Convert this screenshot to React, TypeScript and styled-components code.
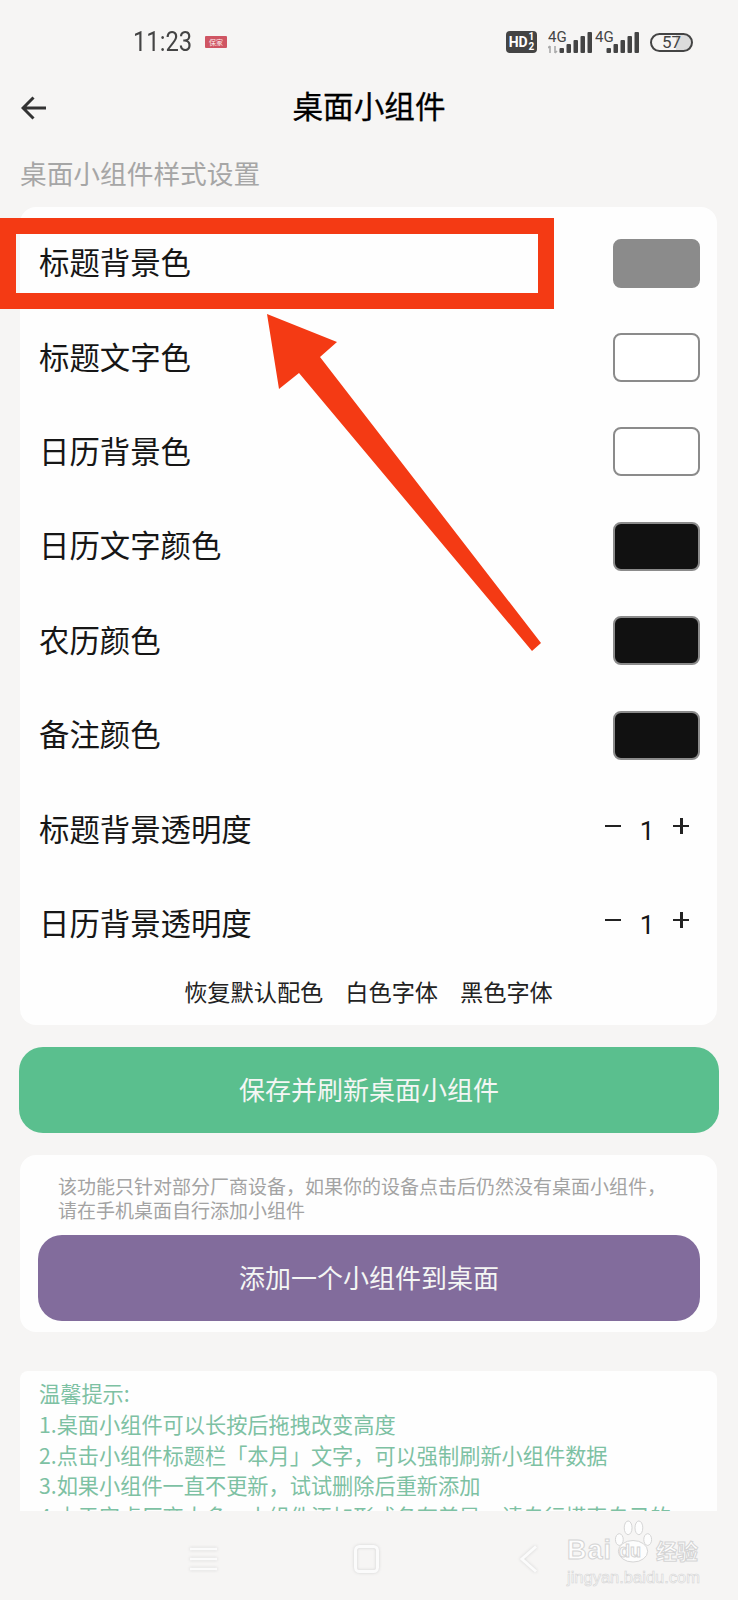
import React from "react"
import styled, { createGlobalStyle } from "styled-components"

const GlobalStyle = createGlobalStyle`
    html, body {
        margin: 0;
        padding: 0;
        background-color: #f6f5f4;
    }
    * {
        box-sizing: border-box;
    }
`
const Page = styled.div`
    position: relative;
    width: 738px;
    height: 1600px;
    overflow: hidden;
    display: flex;
    flex-direction: column;
    background-color: #f6f5f4;
    font-family: "Noto Sans CJK SC", "Noto Sans", sans-serif;
    color: #161616;
`
const Content = styled.div`
    height: 1511px;
    overflow: hidden;
    flex-shrink: 0;
`
const StatusBar = styled.div`
    height: 72px;
    padding: 12px 45px 0 133px;
    display: flex;
    align-items: center;
    color: #444;
    font-family: "Roboto", sans-serif;
`
const Time = styled.span`
    display: inline-block;
    font-size: 27px;
    width: 72px;
    white-space: nowrap;
    transform: scaleX(0.88);
    transform-origin: left center;
`
const AppBadge = styled.span`
    width: 22px;
    height: 12px;
    border-radius: 1px;
    background-color: #cf5563;
    color: #fbe9ea;
    font-size: 7px;
    line-height: 12px;
    text-align: center;
    font-family: "Noto Sans CJK SC", sans-serif;
    margin-right: auto;
`
const HdBadge = styled.span`
    width: 31px;
    height: 22px;
    border-radius: 4px;
    background-color: #444;
    color: #fff;
    display: flex;
    align-items: center;
    justify-content: center;
    gap: 1px;
    font-size: 14px;
    font-weight: 700;
    margin-right: 8px;
`
const HdFraction = styled.span`
    display: flex;
    flex-direction: column;
    font-size: 10px;
    line-height: 10px;
`
const SignalIcon = styled.svg`
    margin-left: 3px;
    flex-shrink: 0;
`
const Battery = styled.span`
    position: relative;
    width: 43px;
    height: 19px;
    margin-left: 11px;
    border: 2px solid #444;
    border-radius: 10px;
    overflow: hidden;
    font-size: 17px;
    line-height: 15px;
    text-align: center;
    background: linear-gradient(to right, transparent 62%, #dcdcdc 62%);
`
const Header = styled.div`
    position: relative;
    height: 70px;
    padding-bottom: 5px;
    display: flex;
    align-items: center;
    justify-content: center;
`
const BackButton = styled.svg`
    position: absolute;
    left: 21px;
    top: 24px;
`
const Title = styled.h1`
    margin: 0;
    font-size: 30.6px;
    font-weight: 400;
    color: #000;
    -webkit-text-stroke: 0.3px #000;
`
const SectionLabel = styled.div`
    height: 65px;
    padding: 16px 0 0 20px;
    font-size: 26.7px;
    line-height: 30px;
    color: #a6a6a6;
`
const Card = styled.div`
    margin: 0 21px 0 20px;
    padding-top: 9px;
    border-radius: 16px;
    background-color: #fefefe;
`
const Row = styled.div`
    height: 94.4px;
    padding: 0 17px 0 19px;
    display: flex;
    align-items: center;
    justify-content: space-between;
`
const RowLabel = styled.span`
    font-size: 30.4px;
    line-height: 40px;
    padding-bottom: 4px;
`
const Swatch = styled.span<{ $color: string }>`
    width: 87px;
    height: 49px;
    border-radius: 8px;
    border: 2px solid #8b8b8b;
    background-color: ${(p) => p.$color};
`
const Stepper = styled.div`
    display: flex;
    align-items: center;
    padding-right: 11px;
`
const StepValue = styled.span`
    width: 52px;
    text-align: center;
    font-size: 26px;
    line-height: 30px;
    font-family: "Roboto", sans-serif;
    padding-top: 2px;
`
const StepSign = styled.span<{ $plus?: boolean }>`
    position: relative;
    width: 16px;
    height: 16px;
    margin-top: -8px;
    &::before {
        content: "";
        position: absolute;
        left: 0;
        right: 0;
        top: 7px;
        height: 2.5px;
        background-color: #222;
    }
    &::after {
        content: "";
        display: ${(p) => (p.$plus ? "block" : "none")};
        position: absolute;
        top: 0;
        bottom: 0;
        left: 7px;
        width: 2.5px;
        background-color: #222;
    }
`
const Presets = styled.div`
    height: 54px;
    padding-bottom: 14px;
    display: flex;
    align-items: center;
    justify-content: center;
    gap: 22px;
    font-size: 23.2px;
    color: #222;
`
const WideButton = styled.div<{ $color: string }>`
    height: 86px;
    padding-bottom: 4px;
    border-radius: 24px;
    display: flex;
    align-items: center;
    justify-content: center;
    background-color: ${(p) => p.$color};
    color: #f4f6f4;
    font-size: 26px;
`
const SaveButton = styled(WideButton)`
    margin: 22px 19px 0;
    width: 700px;
`
const AddCard = styled.div`
    margin: 22px 21px 0 20px;
    padding: 19px 17px 11px 18px;
    border-radius: 16px;
    background-color: #fefefe;
`
const AddNote = styled.div`
    padding-left: 20px;
    margin-bottom: 13px;
    font-size: 19px;
    line-height: 24px;
    color: #a3a3a3;
    white-space: nowrap;
`
const TipsCard = styled.div`
    margin: 39px 21px 0 20px;
    padding: 7px 0 0 19px;
    border-radius: 8px 8px 0 0;
    background-color: #fefefe;
    font-size: 21.2px;
    line-height: 30.7px;
    color: #7dc1a3;
    white-space: nowrap;
`
const NavBar = styled.div`
    flex: 1;
    padding: 6px 0 0 190px;
    display: flex;
    align-items: center;
`
const NavIcon = styled.svg<{ $gap: number }>`
    margin-right: ${(p) => p.$gap}px;
    filter: drop-shadow(0 0 1.5px #d2d2d2);
`
const Annotation = styled.svg`
    position: absolute;
    left: 0;
    top: 0;
    pointer-events: none;
`
const HighlightBox = styled.div`
    position: absolute;
    left: 0;
    top: 218px;
    width: 554px;
    height: 91px;
    border: 16px solid #f43a14;
`
const Watermark = styled.div`
    position: absolute;
    left: 567px;
    top: 1520px;
    width: 134px;
    height: 64px;
    color: #fdfdfd;
    -webkit-text-stroke: 1px #d4d4d4;
    font-family: "Liberation Sans", sans-serif;
`
const WatermarkBrand = styled.div`
    display: flex;
    align-items: flex-end;
    height: 43px;
    font-size: 27px;
    line-height: 26px;
    font-weight: 700;
    letter-spacing: 1px;
`
const WatermarkPaw = styled.span`
    position: relative;
    width: 44px;
    height: 43px;
    flex-shrink: 0;
`
const PawText = styled.span`
    position: absolute;
    left: 7px;
    bottom: 2px;
    font-size: 18px;
    line-height: 20px;
    letter-spacing: 0;
`
const WatermarkCjk = styled.span`
    font-family: "Noto Sans CJK SC", sans-serif;
    font-size: 21px;
    line-height: 26px;
    letter-spacing: 0;
    white-space: nowrap;
    flex-shrink: 0;
`
const WatermarkUrl = styled.div`
    margin-top: 5px;
    font-size: 16.5px;
    line-height: 18px;
    white-space: nowrap;
    -webkit-text-stroke: 0.6px #d4d4d4;
`

const Signal = ({ withArrows }: { withArrows?: boolean }) => {
    const bars = [5, 9, 13, 17, 21]
    return (
        <SignalIcon width="44" height="28" viewBox="0 0 44 28">
            <text x="0" y="14" fontSize="15" fill="#444" fontFamily="Roboto, sans-serif">
                4G
            </text>
            {withArrows && (
                <path d="M2 18v7M0 20l2-2M7 18v7M9 23l-2 2" stroke="#aaa" strokeWidth="1.6" fill="none" />
            )}
            {bars.map((h, i) => (
                <rect key={i} x={11.5 + i * 7} y={25 - h} width="4.5" height={h} rx="1" fill="#444" />
            ))}
        </SignalIcon>
    )
}

const colorRows = [
    { label: "标题背景色", color: "#8b8b8b" },
    { label: "标题文字色", color: "#ffffff" },
    { label: "日历背景色", color: "#ffffff" },
    { label: "日历文字颜色", color: "#111111" },
    { label: "农历颜色", color: "#111111" },
    { label: "备注颜色", color: "#111111" },
]
const stepRows = ["标题背景透明度", "日历背景透明度"]
const noteLines = [
    "该功能只针对部分厂商设备\uFF0C如果你的设备点击后仍然没有桌面小组件\uFF0C",
    "请在手机桌面自行添加小组件",
]
const tips = [
    "温馨提示:",
    "1.桌面小组件可以长按后拖拽改变高度",
    "2.点击小组件标题栏「本月」文字\uFF0C可以强制刷新小组件数据",
    "3.如果小组件一直不更新\uFF0C试试删除后重新添加",
    "4.由于安卓厂商太多\uFF0C小组件添加形式各有差异\uFF0C请自行摸索自己的",
]

const App = () => {
    return (
        <Page>
            <GlobalStyle />
            <Content>
                <StatusBar>
                    <Time>11:23</Time>
                    <AppBadge>保家</AppBadge>
                    <HdBadge>
                        HD
                        <HdFraction>
                            <span>1</span>
                            <span>2</span>
                        </HdFraction>
                    </HdBadge>
                    <Signal withArrows />
                    <Signal />
                    <Battery>57</Battery>
                </StatusBar>
                <Header>
                    <BackButton width="26" height="24" viewBox="0 0 26 24" fill="none">
                        <path
                            d="M25 12H2M12.5 1.5 2 12l10.5 10.5"
                            stroke="#333"
                            strokeWidth="3"
                        />
                    </BackButton>
                    <Title>桌面小组件</Title>
                </Header>
                <SectionLabel>桌面小组件样式设置</SectionLabel>
                <Card>
                    {colorRows.map((e) => (
                        <Row key={e.label}>
                            <RowLabel>{e.label}</RowLabel>
                            <Swatch $color={e.color} />
                        </Row>
                    ))}
                    {stepRows.map((label) => (
                        <Row key={label}>
                            <RowLabel>{label}</RowLabel>
                            <Stepper>
                                <StepSign />
                                <StepValue>1</StepValue>
                                <StepSign $plus />
                            </Stepper>
                        </Row>
                    ))}
                    <Presets>
                        <span>恢复默认配色</span>
                        <span>白色字体</span>
                        <span>黑色字体</span>
                    </Presets>
                </Card>
                <SaveButton $color="#5abf8e">保存并刷新桌面小组件</SaveButton>
                <AddCard>
                    <AddNote>
                        {noteLines.map((e) => (
                            <div key={e}>{e}</div>
                        ))}
                    </AddNote>
                    <WideButton $color="#826c9c">添加一个小组件到桌面</WideButton>
                </AddCard>
                <TipsCard>
                    {tips.map((e) => (
                        <div key={e}>{e}</div>
                    ))}
                </TipsCard>
            </Content>
            <NavBar>
                <NavIcon $gap={137} width="27" height="24" viewBox="0 0 27 24" fill="none">
                    <path d="M0 2h27M0 12h27M0 22h27" stroke="#fbfbfb" strokeWidth="2.5" />
                </NavIcon>
                <NavIcon $gap={141} width="25" height="28" viewBox="0 0 25 28" fill="none">
                    <rect x="1.5" y="1.5" width="22" height="25" rx="4" stroke="#fbfbfb" strokeWidth="3" />
                </NavIcon>
                <NavIcon $gap={0} width="18" height="28" viewBox="0 0 18 28" fill="none">
                    <path d="M16 1.5 2 14l14 12.5" stroke="#fbfbfb" strokeWidth="3" />
                </NavIcon>
            </NavBar>
            <HighlightBox />
            <Annotation width="738" height="1600" viewBox="0 0 738 1600">
                <path
                    d="M267 314 337 342 320 357 541 643 532 651 299 373 279 389Z"
                    fill="#f43a14"
                />
            </Annotation>
            <Watermark>
                <WatermarkBrand>
                    <span>Bai</span>
                    <WatermarkPaw>
                        <svg width="44" height="43" viewBox="0 0 44 44" fill="#fdfdfd" stroke="#d4d4d4">
                            <ellipse cx="7" cy="20" rx="4" ry="6" />
                            <ellipse cx="16" cy="8" rx="4" ry="7" />
                            <ellipse cx="27" cy="8" rx="4" ry="7" />
                            <ellipse cx="36" cy="20" rx="4" ry="6" />
                            <ellipse cx="21" cy="32" rx="15" ry="11" />
                        </svg>
                        <PawText>du</PawText>
                    </WatermarkPaw>
                    <WatermarkCjk>经验</WatermarkCjk>
                </WatermarkBrand>
                <WatermarkUrl>jingyan.baidu.com</WatermarkUrl>
            </Watermark>
        </Page>
    )
}
export default App
